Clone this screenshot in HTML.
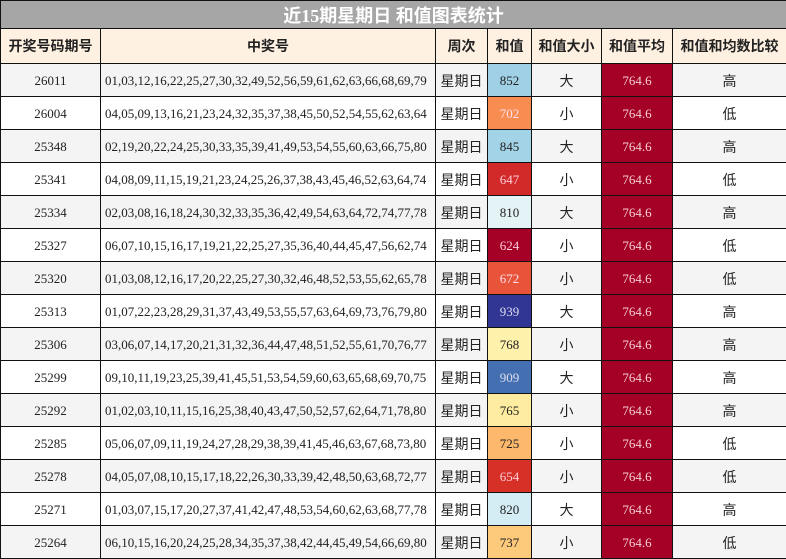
<!DOCTYPE html>
<html><head><meta charset="utf-8"><style>
html,body{margin:0;padding:0;background:#fff;}
table{border-collapse:collapse;table-layout:fixed;width:786px;font-family:"Liberation Serif","Noto Sans CJK SC",serif;}
td,th{border:1px solid #111;text-align:center;padding:0;overflow:hidden;white-space:nowrap;}
.t{background:#a6a6a6;color:#fff;font-family:"Liberation Serif","Noto Sans CJK SC",sans-serif;font-weight:bold;font-size:18px;height:27px;}
.h th{background:#fef1e1;height:34px;font-family:"Liberation Sans","Noto Sans CJK SC",sans-serif;font-size:14px;font-weight:bold;color:#222;}
tr.r td{height:31px;padding-top:1px;font-size:13px;color:#222;}
tr.r:nth-child(odd) td{background:#f4f4f4;}
tr.r td.n{text-align:left;padding-left:4px;}
tr.r td.c{font-family:"Liberation Sans","Noto Sans CJK SC",sans-serif;font-size:14px;height:30px;padding-top:2px;}
tr.r td.a{background:#a50026 !important;color:#f5d0d5;}
</style></head><body>
<table>
<colgroup><col style="width:100px"><col style="width:335px"><col style="width:52px"><col style="width:44px"><col style="width:70px"><col style="width:71px"><col style="width:114px"></colgroup>
<tr><td class="t" colspan="7">近15期星期日 和值图表统计</td></tr>
<tr class="h"><th>开奖号码期号</th><th>中奖号</th><th>周次</th><th>和值</th><th>和值大小</th><th>和值平均</th><th>和值和均数比较</th></tr>
<tr class="r"><td>26011</td><td class="n">01,03,12,16,22,25,27,30,32,49,52,56,59,61,62,63,66,68,69,79</td><td class="c">星期日</td><td style="background:#9fd0e5">852</td><td class="c">大</td><td class="a">764.6</td><td class="c">高</td></tr>
<tr class="r"><td>26004</td><td class="n">04,05,09,13,16,21,23,24,32,35,37,38,45,50,52,54,55,62,63,64</td><td class="c">星期日</td><td style="background:#f88d52;color:#fde">702</td><td class="c">小</td><td class="a">764.6</td><td class="c">低</td></tr>
<tr class="r"><td>25348</td><td class="n">02,19,20,22,24,25,30,33,35,39,41,49,53,54,55,60,63,66,75,80</td><td class="c">星期日</td><td style="background:#a3d3e6">845</td><td class="c">大</td><td class="a">764.6</td><td class="c">高</td></tr>
<tr class="r"><td>25341</td><td class="n">04,08,09,11,15,19,21,23,24,25,26,37,38,43,45,46,52,63,64,74</td><td class="c">星期日</td><td style="background:#d22a28;color:#fcd">647</td><td class="c">小</td><td class="a">764.6</td><td class="c">低</td></tr>
<tr class="r"><td>25334</td><td class="n">02,03,08,16,18,24,30,32,33,35,36,42,49,54,63,64,72,74,77,78</td><td class="c">星期日</td><td style="background:#e3f3f6">810</td><td class="c">大</td><td class="a">764.6</td><td class="c">高</td></tr>
<tr class="r"><td>25327</td><td class="n">06,07,10,15,16,17,19,21,22,25,27,35,36,40,44,45,47,56,62,74</td><td class="c">星期日</td><td style="background:#a50026;color:#fcd">624</td><td class="c">小</td><td class="a">764.6</td><td class="c">低</td></tr>
<tr class="r"><td>25320</td><td class="n">01,03,08,12,16,17,20,22,25,27,30,32,46,48,52,53,55,62,65,78</td><td class="c">星期日</td><td style="background:#e8543a;color:#fde">672</td><td class="c">小</td><td class="a">764.6</td><td class="c">低</td></tr>
<tr class="r"><td>25313</td><td class="n">01,07,22,23,28,29,31,37,43,49,53,55,57,63,64,69,73,76,79,80</td><td class="c">星期日</td><td style="background:#313695;color:#dde">939</td><td class="c">大</td><td class="a">764.6</td><td class="c">高</td></tr>
<tr class="r"><td>25306</td><td class="n">03,06,07,14,17,20,21,31,32,36,44,47,48,51,52,55,61,70,76,77</td><td class="c">星期日</td><td style="background:#fef1ab">768</td><td class="c">小</td><td class="a">764.6</td><td class="c">高</td></tr>
<tr class="r"><td>25299</td><td class="n">09,10,11,19,23,25,39,41,45,51,53,54,59,60,63,65,68,69,70,75</td><td class="c">星期日</td><td style="background:#4470b1;color:#dde">909</td><td class="c">大</td><td class="a">764.6</td><td class="c">高</td></tr>
<tr class="r"><td>25292</td><td class="n">01,02,03,10,11,15,16,25,38,40,43,47,50,52,57,62,64,71,78,80</td><td class="c">星期日</td><td style="background:#feeda0">765</td><td class="c">小</td><td class="a">764.6</td><td class="c">高</td></tr>
<tr class="r"><td>25285</td><td class="n">05,06,07,09,11,19,24,27,28,29,38,39,41,45,46,63,67,68,73,80</td><td class="c">星期日</td><td style="background:#fdb86b">725</td><td class="c">小</td><td class="a">764.6</td><td class="c">低</td></tr>
<tr class="r"><td>25278</td><td class="n">04,05,07,08,10,15,17,18,22,26,30,33,39,42,48,50,63,68,72,77</td><td class="c">星期日</td><td style="background:#d73027;color:#fcd">654</td><td class="c">小</td><td class="a">764.6</td><td class="c">低</td></tr>
<tr class="r"><td>25271</td><td class="n">01,03,07,15,17,20,27,37,41,42,47,48,53,54,60,62,63,68,77,78</td><td class="c">星期日</td><td style="background:#d4edf4">820</td><td class="c">大</td><td class="a">764.6</td><td class="c">高</td></tr>
<tr class="r"><td>25264</td><td class="n">06,10,15,16,20,24,25,28,34,35,37,38,42,44,45,49,54,66,69,80</td><td class="c">星期日</td><td style="background:#fdc97a">737</td><td class="c">小</td><td class="a">764.6</td><td class="c">低</td></tr>
</table>
</body></html>
